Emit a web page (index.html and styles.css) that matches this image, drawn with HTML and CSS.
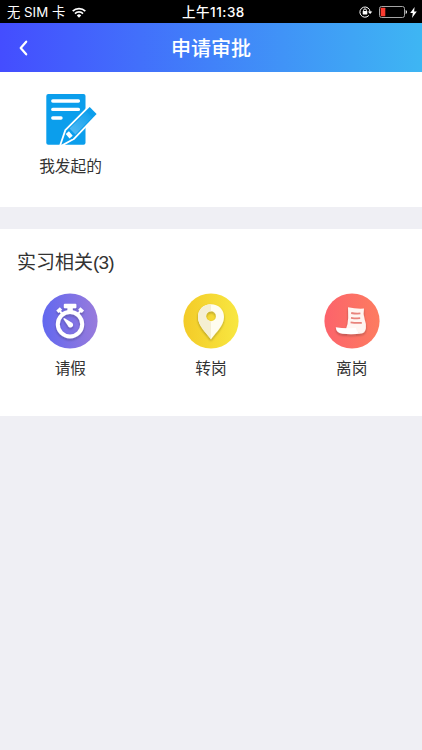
FILE: index.html
```
<!DOCTYPE html>
<html lang="zh-CN">
<head>
    <meta charset="UTF-8">
    <meta name="viewport" content="width=device-width, initial-scale=1.0">
    <title>申请审批</title>
    <link rel="stylesheet" href="styles.css">
</head>
<body>
    <div class="status-bar">
        <div class="status-left">
            <span class="carrier">无 SIM 卡</span>
            <svg class="wifi" width="14" height="11" viewBox="0 0 14 11" fill="none" stroke="#fff" stroke-width="1.7">
                <path d="M.7 4.1a9 9 0 0 1 12.6 0M3 6.6a5.7 5.7 0 0 1 8 0"/>
                <path d="M4.8 8.4a3.2 3.2 0 0 1 4.4 0L7 10.7z" fill="#fff" stroke="none"/>
            </svg>
        </div>
        <span class="time">上午11:38</span>
        <div class="status-right">
            <svg width="14" height="12" viewBox="0 0 14 12" fill="none" stroke="#fff">
                <path d="M9.9 9.4A5.1 5.1 0 1 1 11.1 6"/>
                <path d="M8.9 5.4h4.4L11.1 8z" fill="#fff" stroke="none"/>
                <path d="M4.6 5.5V4.3a1.4 1.4 0 0 1 2.8 0v1.2"/>
                <rect x="3.7" y="5.1" width="4.6" height="3.4" rx=".4" fill="#fff" stroke="none"/>
            </svg>
            <svg class="battery" width="29" height="12" viewBox="0 0 29 12">
                <rect x=".5" y=".5" width="25" height="11" rx="2" fill="none" stroke="#a5a5a5"/>
                <rect x="1.7" y="1.7" width="4.6" height="8.6" rx=".6" fill="#fb3b30"/>
                <path d="M26.7 4a2.2 2.2 0 0 1 0 4z" fill="#fff"/>
            </svg>
            <svg class="bolt" width="7" height="11" viewBox="0 0 7 11" fill="#fff">
                <path d="M4.6 0L.2 6h2.6L2 11l4.8-6.5H4.1z"/>
            </svg>
        </div>
    </div>

    <div class="header">
        <svg class="back" width="9" height="16" viewBox="0 0 9 16" fill="none" stroke="#fff" stroke-width="2.2" stroke-linecap="round" stroke-linejoin="round">
            <path d="M7.2 1.7L1.7 8l5.5 6.3"/>
        </svg>
        <h1>申请审批</h1>
    </div>

    <div class="section mine">
        <div class="item">
            <svg width="52" height="52" viewBox="0 0 52 52">
                <defs>
                    <linearGradient id="pencil" x1="0" y1="1" x2="1" y2="0">
                        <stop offset="0" stop-color="#58bcf4"/>
                        <stop offset="1" stop-color="#0b9eec"/>
                    </linearGradient>
                </defs>
                <rect x="1.3" y="0" width="39.2" height="50.8" rx="2" fill="#0b9eec"/>
                <path d="M7.8 7h25.6M7.8 15.4h25.6M7.8 24H16" stroke="#fff" stroke-width="3.4" stroke-linecap="round"/>
                <path d="M16.3 50.8l4.9-14.4L44.7 12.9l6.9 7L28.3 44.2z" fill="#0b9eec" stroke="#fff" stroke-width="3.6" stroke-linejoin="round"/>
                <path d="M16.3 50.8l4.9-14.4L44.7 12.9l6.9 7L28.3 44.2z" fill="#0b9eec"/>
                <path d="M24.6 34.6L41.6 17.6l5.4 5.6L30.4 40.6z" fill="url(#pencil)"/>
                <path d="M22.3 38.6l3.8 4.5" stroke="#fff" stroke-width="4.2"/>
            </svg>
            <span>我发起的</span>
        </div>
    </div>

    <div class="section practice">
        <h2>实习相关<span class="count">(3)</span></h2>
        <div class="grid">
            <div class="item">
                <svg width="56" height="56" viewBox="0 0 56 56">
                    <defs>
                        <linearGradient id="purple" x1="0" y1="0" x2="1" y2="0">
                            <stop offset="0" stop-color="#6268ef"/>
                            <stop offset="1" stop-color="#987bdc"/>
                        </linearGradient>
                        <filter id="shadow" x="-30%" y="-30%" width="160%" height="160%">
                            <feDropShadow dx="0" dy="1.5" stdDeviation="1.3" flood-color="#222" flood-opacity=".3"/>
                        </filter>
                    </defs>
                    <circle cx="28" cy="28" r="27.6" fill="url(#purple)"/>
                    <g filter="url(#shadow)">
                        <circle cx="28" cy="31.3" r="12.2" fill="none" stroke="#fff" stroke-width="4"/>
                        <path d="M22.8 10.8h10.6q1 0 1 1v2.4q0 1-1 1h-2.6v4h-5.4v-4h-2.6q-1 0-1-1v-2.4q0-1 1-1z" fill="#fff"/>
                        <path d="M15.4 18.8l3.6-3.2M40.9 18.8l-3.6-3.2" stroke="#fff" stroke-width="3.4"/>
                        <path d="M17.8 17.8l2.4 3M38.5 17.8l-2.4 3" stroke="#fff" stroke-width="2"/>
                        <path d="M21.6 26.3q-.5-1.5 1-1l6.6 4a2.7 2.7 0 1 1-3.4 3.3z" fill="#fff"/>
                    </g>
                </svg>
                <span>请假</span>
            </div>
            <div class="item">
                <svg width="56" height="56" viewBox="0 0 56 56">
                    <defs>
                        <linearGradient id="yellow" x1="0" y1="0" x2="1" y2="0">
                            <stop offset="0" stop-color="#f3cb28"/>
                            <stop offset="1" stop-color="#f8e741"/>
                        </linearGradient>
                    </defs>
                    <circle cx="28" cy="28" r="27.6" fill="url(#yellow)"/>
                    <g filter="url(#shadow)">
                        <path fill-rule="evenodd" d="M28 11.3c-7.5 0-13 5.4-13 12.6C15 32.5 22.5 38.5 28 46.2c5.5-7.7 13-13.7 13-22.3 0-7.2-5.5-12.6-13-12.6zm0 7a5 5 0 1 1 0 10 5 5 0 0 1 0-10z" fill="#fffdf0"/>
                        <path d="M28 11.3c-7.5 0-13 5.4-13 12.6C15 32.5 22.5 38.5 28 46.2V28.3a5 5 0 0 1 0-10z" fill="#f5efd3"/>
                    </g>
                </svg>
                <span>转岗</span>
            </div>
            <div class="item">
                <svg width="56" height="56" viewBox="0 0 56 56">
                    <defs>
                        <linearGradient id="red" x1="0" y1="0" x2="1" y2="0">
                            <stop offset="0" stop-color="#fc636b"/>
                            <stop offset="1" stop-color="#fd7c60"/>
                        </linearGradient>
                    </defs>
                    <circle cx="28" cy="28" r="27.6" fill="url(#red)"/>
                    <g filter="url(#shadow)">
                        <path d="M24 14.3q8 1.8 16 1.3-1.3 5.6.8 11.4 1.7 4.3 1.1 8.2-.8 5-4.6 5.2L22 36q2.1-5 2.2-11 0-5.8-.2-10.7z" fill="#fff5f1"/>
                        <path d="M11.8 34.2q10 2 20.2.5.1 4.9 5.3 5.7-8.7 1.3-19 .3-6.2-.8-6.5-6.5z" fill="#fff"/>
                    </g>
                    <path d="M27.2 20q4.7.8 9.2.4M27 24.8q4.7.8 9.2.4M26.6 29.4q5.4.8 11.2.4" fill="none" stroke="#e8837b" stroke-width="1.8"/>
                </svg>
                <span>离岗</span>
            </div>
        </div>
    </div>
</body>
</html>
```

FILE: styles.css
```
* {
    box-sizing: border-box;
}
body {
    margin: 0;
    min-height: 100vh;
    font-family: "Liberation Sans", "Noto Sans CJK SC", sans-serif;
    color: #333;
    background-color: #efeff4;
}
svg {
    display: block;
    flex: none;
}
h1, h2 {
    margin: 0;
    font-weight: normal;
}

/* Status bar */
.status-bar {
    display: grid;
    grid-template-columns: 1fr auto 1fr;
    align-items: center;
    height: 23px;
    padding: 1px 5px 0 7px;
    color: #fff;
    background-color: #000;
    font-family: Inter, "Noto Sans CJK SC", sans-serif;
    font-size: 13.3px;
    line-height: 22px;
}
.status-left, .status-right {
    display: flex;
    align-items: center;
}
.status-right {
    justify-content: flex-end;
}
.wifi {
    margin-left: 7px;
}
.time {
    margin-left: 3px;
    font-size: 13.5px;
    font-weight: 500;
    letter-spacing: .5px;
}
.battery {
    margin-left: 6px;
}
.bolt {
    margin-left: 2px;
}

/* Header */
.header {
    display: grid;
    grid-template-columns: 40px 1fr 40px;
    align-items: center;
    height: 49px;
    color: #fff;
    background: linear-gradient(to right, #444dff, #3eb6f3);
}
.header h1 {
    padding-top: 2px;
    font-size: 20px;
    font-weight: 500;
    line-height: 30px;
    text-align: center;
}
.back {
    margin-left: 19px;
}

/* Sections */
.section {
    background-color: #fff;
}
.mine {
    height: 135px;
    padding-top: 22px;
}
.practice {
    height: 187px;
    margin-top: 22px;
    padding-top: 19px;
}
.practice h2 {
    padding-left: 17px;
    font-size: 19px;
    line-height: 30px;
}
.count {
    letter-spacing: -.8px;
}
.grid {
    display: grid;
    grid-template-columns: repeat(3, 1fr);
    margin-top: 15px;
}
.item {
    display: flex;
    flex-direction: column;
    align-items: center;
    font-size: 15.7px;
    line-height: 24px;
}
.mine .item {
    width: 141px;
}
.item span {
    margin-top: 8px;
}
.mine .item span {
    margin-top: 9px;
}
```
